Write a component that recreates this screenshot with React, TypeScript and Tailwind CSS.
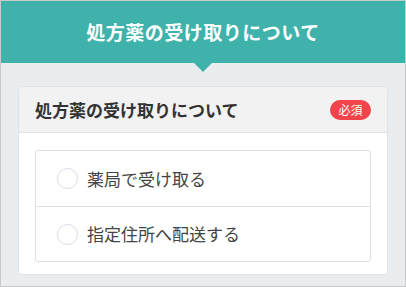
const jp = { fontFamily: '"Noto Sans CJK JP", "Noto Sans", sans-serif' };

const options = ['薬局で受け取る', '指定住所へ配送する'];

export default function App() {
  return (
    <div
      className="w-[406px] h-[287px] border border-[#c8cacc] bg-[#e9edf0] overflow-hidden"
      style={jp}
    >
      {/* Top banner */}
      <div className="relative h-[62px] bg-[#3fb3ab] flex items-center justify-center">
        <h1 className="text-[19px] font-bold text-white tracking-[0.5px]">
          処方薬の受け取りについて
        </h1>
        <div className="absolute left-[193px] top-[62px] w-0 h-0 border-l-[9px] border-r-[9px] border-t-[9px] border-l-transparent border-r-transparent border-t-[#3fb3ab]" />
      </div>

      <div className="pt-[23px] px-[17px]">
        <div className="rounded-[4px] border border-[#dde3e8] bg-white overflow-hidden">
          {/* Card header */}
          <div className="h-[46px] bg-[#f2f2f2] border-b border-[#dde3e8] flex items-center justify-between pl-[16px] pr-[16px]">
            <span className="text-[17px] font-bold text-[#333]">処方薬の受け取りについて</span>
            <span className="w-[41px] h-[20px] rounded-full bg-[#f2444a] text-white text-[12px] flex items-center justify-center">
              必須
            </span>
          </div>

          {/* Options */}
          <div className="pt-[17px] pb-[12px] px-[16px]">
            <div className="rounded-[3px] border border-[#e0e0e0]">
              {options.map((label, i) => (
                <div
                  key={label}
                  className={`h-[55px] flex items-center pl-[21px] ${i > 0 ? 'border-t border-[#e0e0e0]' : ''}`}
                >
                  <span className="w-[21px] h-[21px] rounded-full border border-[#d6dde3] bg-white" />
                  <span className="ml-[9px] text-[17px] text-[#444]">{label}</span>
                </div>
              ))}
            </div>
          </div>
        </div>
      </div>
    </div>
  );
}
